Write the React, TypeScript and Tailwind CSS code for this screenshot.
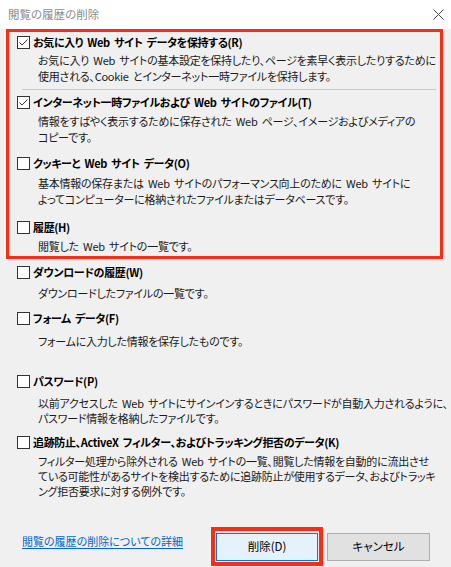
import React from "react";

type Entry = {
  label: string;
  checked?: boolean;
  lines: string[];
  top: string;
  gap: string;
  lead: string;
};

const boxed: Entry[] = [
  {
    label: "お気に入り Web サイト データを保持する(R)",
    checked: true,
    lines: [
      "お気に入り Web サイトの基本設定を保持したり、ページを素早く表示したりするために",
      "使用される、Cookie とインターネット一時ファイルを保持します。",
    ],
    top: "mt-[2px]",
    gap: "mt-[2px]",
    lead: "leading-[16px]",
  },
  {
    label: "インターネット一時ファイルおよび Web サイトのファイル(T)",
    checked: true,
    lines: [
      "情報をすばやく表示するために保存された Web ページ、イメージおよびメディアの",
      "コピーです。",
    ],
    top: "mt-[4px]",
    gap: "mt-[3px]",
    lead: "leading-[16px]",
  },
  {
    label: "クッキーと Web サイト データ(O)",
    lines: [
      "基本情報の保存または Web サイトのパフォーマンス向上のために Web サイトに",
      "よってコンピューターに格納されたファイルまたはデータベースです。",
    ],
    top: "mt-[10px]",
    gap: "mt-[4px]",
    lead: "leading-[16px]",
  },
  {
    label: "履歴(H)",
    lines: ["閲覧した Web サイトの一覧です。"],
    top: "mt-[12px]",
    gap: "mt-[3px]",
    lead: "leading-[16px]",
  },
];

const rest: Entry[] = [
  {
    label: "ダウンロードの履歴(W)",
    lines: ["ダウンロードしたファイルの一覧です。"],
    top: "mt-[5px]",
    gap: "mt-[5px]",
    lead: "leading-[16px]",
  },
  {
    label: "フォーム データ(F)",
    lines: ["フォームに入力した情報を保存したものです。"],
    top: "mt-[9px]",
    gap: "mt-[7px]",
    lead: "leading-[16px]",
  },
  {
    label: "パスワード(P)",
    lines: [
      "以前アクセスした Web サイトにサインインするときにパスワードが自動入力されるように、",
      "パスワード情報を格納したファイルです。",
    ],
    top: "mt-[24px]",
    gap: "mt-[7px]",
    lead: "leading-[15px]",
  },
  {
    label: "追跡防止、ActiveX フィルター、およびトラッキング拒否のデータ(K)",
    lines: [
      "フィルター処理から除外される Web サイトの一覧、閲覧した情報を自動的に流出させ",
      "ている可能性があるサイトを検出するために追跡防止が使用するデータ、およびトラッキ",
      "ング拒否要求に対する例外です。",
    ],
    top: "mt-[8px]",
    gap: "mt-[4px]",
    lead: "leading-[15px]",
  },
];

function CheckBox({ checked }: { checked?: boolean }) {
  return (
    <span className="w-[13px] h-[13px] border border-[#333333] bg-white flex items-center justify-center shrink-0">
      {checked && (
        <svg width="11" height="11" viewBox="0 0 11 11">
          <path d="M1.5 5.5 L4 8 L9.5 2.5" fill="none" stroke="#333333" strokeWidth="1" />
        </svg>
      )}
    </span>
  );
}

function Option({ e }: { e: Entry }) {
  return (
    <div className={e.top}>
      <div className="flex items-center h-[16px] gap-[3px]">
        <CheckBox checked={e.checked} />
        <span className="font-bold text-[11px] tracking-[-0.35px] [word-spacing:2px] leading-[16px] text-black whitespace-nowrap">
          {e.label}
        </span>
      </div>
      <div
        className={`${e.gap} ${e.lead} pl-[21px] text-[11px] tracking-[-0.25px] [word-spacing:2px] text-[#1a1a1a] whitespace-nowrap`}
      >
        {e.lines.map((l, i) => (
          <div key={i}>{l}</div>
        ))}
      </div>
    </div>
  );
}

export default function App() {
  return (
    <div
      className="w-[451px] h-[567px] bg-[#f0f0f0] flex flex-col overflow-hidden [font-feature-settings:'palt']"
      style={{ fontFamily: '"Noto Sans CJK JP", "Noto Sans", sans-serif' }}
    >
      {/* title bar */}
      <div className="h-[29px] bg-white flex items-center justify-between pl-[8px] pr-[6px] shrink-0">
        <span className="text-[11.5px] text-[#8c8c8c]">閲覧の履歴の削除</span>
        <svg width="11" height="11" viewBox="0 0 11 11" className="mr-[1px]">
          <path d="M0.5 0.5 L10.5 10.5 M10.5 0.5 L0.5 10.5" stroke="#444444" strokeWidth="1" />
        </svg>
      </div>

      {/* highlighted group */}
      <div className="ml-[6px] w-[437px] h-[230px] border-[3px] border-[#fa2d14] pl-[8px]">
        <Option e={boxed[0]} />
        <div className="mt-[5px] ml-[5px] mr-[4px] h-px bg-[#c9c9c9]" />
        {boxed.slice(1).map((e, i) => (
          <Option key={i} e={e} />
        ))}
      </div>

      <div className="pl-[17px]">
        {rest.map((e, i) => (
          <Option key={i} e={e} />
        ))}
      </div>

      {/* footer */}
      <div className="mt-auto mb-[1px] flex items-center pl-[22px] pr-[21px] h-[39px]">
        <a className="text-[11px] text-[#0066cc] underline underline-offset-2 whitespace-nowrap mb-[10px]">
          閲覧の履歴の削除についての詳細
        </a>
        <div className="ml-auto flex items-center gap-[4px]">
          <div className="border-[4px] border-[#fa2d14] p-[1px]">
            <button className="w-[102px] h-[28px] border border-[#0078d7] bg-[#e5f1fb] text-[11.5px] text-black">
              削除(D)
            </button>
          </div>
          <button className="w-[103px] h-[28px] border border-[#adadad] bg-[#e1e1e1] text-[11.5px] text-black">
            キャンセル
          </button>
        </div>
      </div>
    </div>
  );
}
